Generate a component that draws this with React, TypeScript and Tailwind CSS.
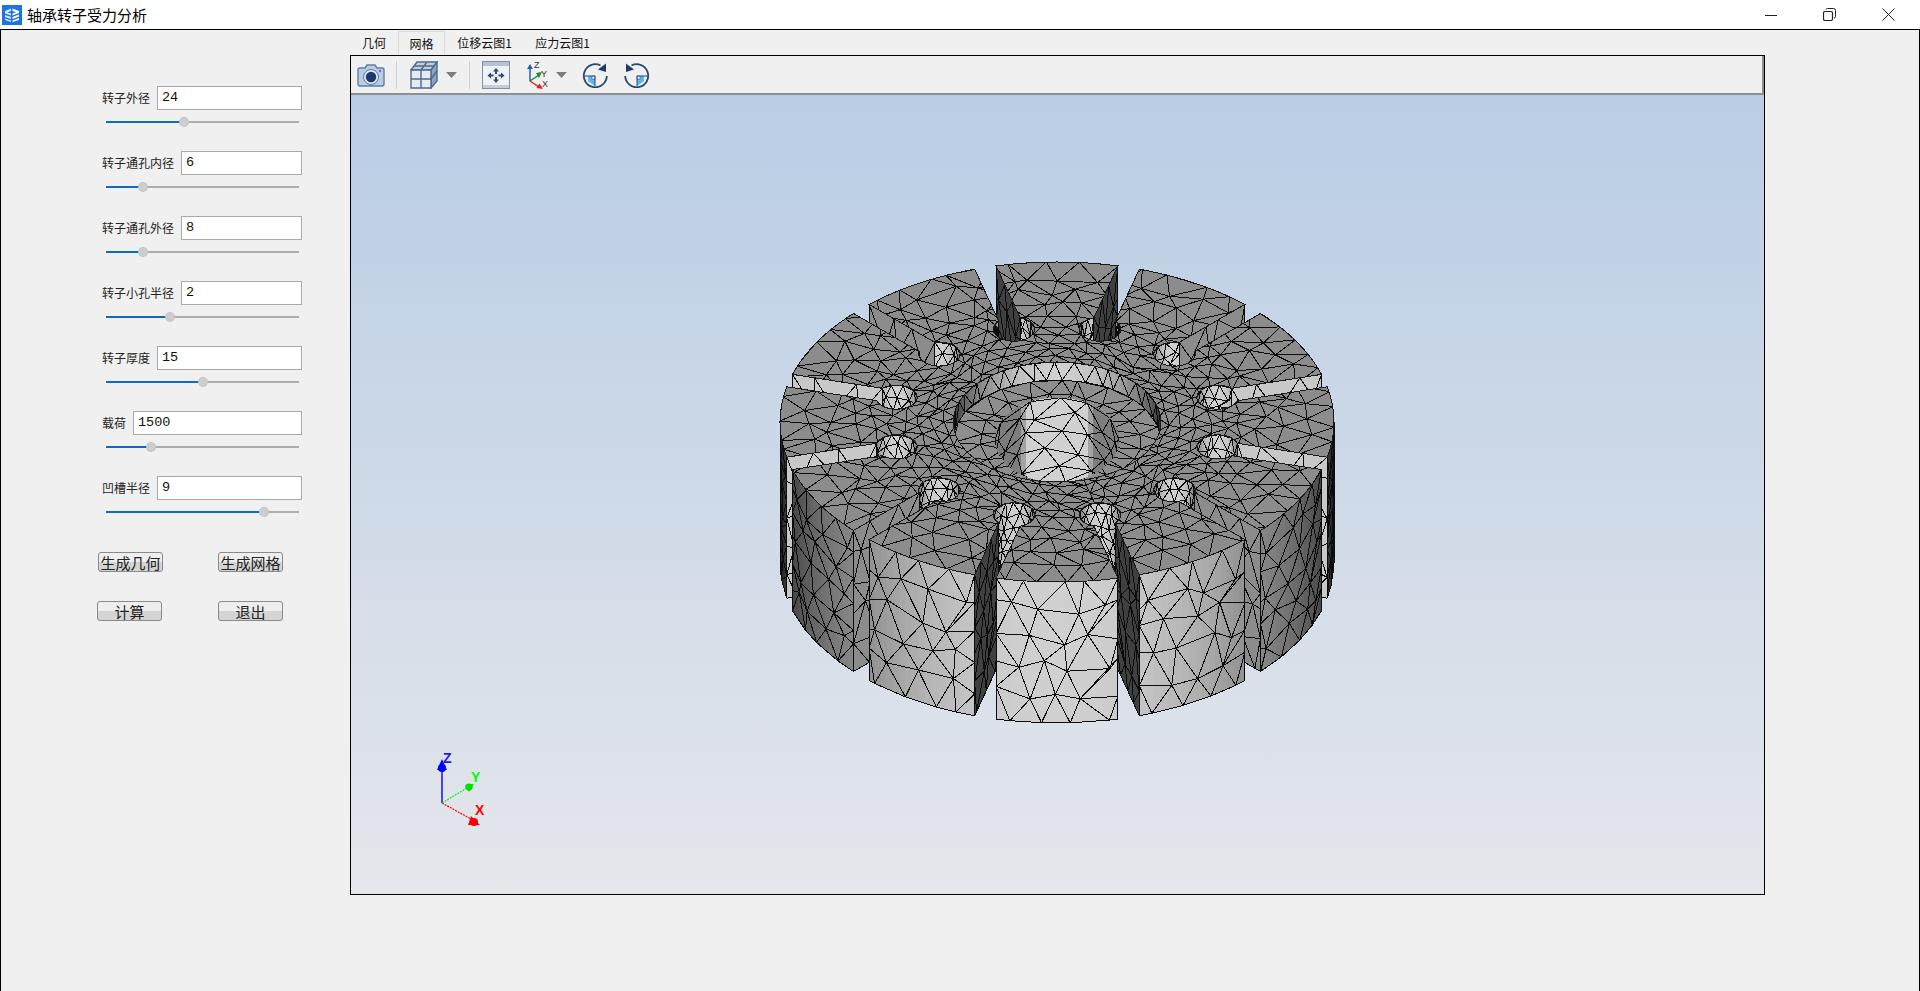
import React, { useMemo } from 'react';

// ---------- rotor mesh: small projection + painter's order, walls first, top face last ----------
const CX = 1057, CY = 422, RX = 277, RY = 160, H = 141;
const SLOT_W = 0.04, HOLE_R = 0.075, HOLE_AT = 0.6, RECESS_R = 0.375, RECESS_T = 18 / 141;
const BORE_X = 0.224, BORE_Y = 0.265;
const rad = (d: number) => (d * Math.PI) / 180;

type PathPt = { x: number; y: number; ny: number };
type Fill = { pts: string; color: string };
type Item = { key: number; fills: Fill[]; lines: string };

function makeRng(seed: number) {
  let s = seed;
  return () => {
    s = (s + 0x6d2b79f5) | 0;
    let t = Math.imul(s ^ (s >>> 15), 1 | s);
    t = (t + Math.imul(t ^ (t >>> 7), 61 | t)) ^ t;
    return ((t ^ (t >>> 14)) >>> 0) / 4294967296;
  };
}
const rng = makeRng(24);

const proj = (x: number, y: number, t: number): [number, number] => [CX + x * RX, CY + y * RY + t * H];
const f1 = (n: number) => n.toFixed(1);

function shade(ny: number) {
  const nv = Math.max(0, ny) * 0.816;
  const g = Math.min(225, Math.round(20 + 208 * nv + 83 * Math.max(0, nv - 0.6)));
  return `rgb(${g},${g},${g})`;
}

// triangle net over a (u,v) patch, odd rows shifted half a column; rows may have different column counts
function meshLines(
  fn: (u: number, v: number) => [number, number],
  cols: number | ((row: number) => number),
  rows: number,
  ju = 0.28,
  jv = 0.28,
) {
  const grid: { u: number; p: [number, number] }[][] = [];
  for (let r = 0; r <= rows; r++) {
    const n = typeof cols === 'number' ? cols : cols(r);
    const row: { u: number; p: [number, number] }[] = [];
    const us: number[] = [];
    if (r % 2 === 0) for (let i = 0; i <= n; i++) us.push(i / n);
    else {
      us.push(0);
      for (let i = 0; i < n; i++) us.push((i + 0.5) / n);
      us.push(1);
    }
    for (const u of us) {
      const uu = u === 0 || u === 1 ? u : u + ((rng() - 0.5) * 2 * ju) / n;
      const vv = r === 0 || r === rows ? r / rows : (r + (rng() - 0.5) * 2 * jv) / rows;
      row.push({ u, p: fn(uu, vv) });
    }
    grid.push(row);
  }
  let d = '';
  const seg = (a: [number, number], b: [number, number]) => {
    d += `M${f1(a[0])} ${f1(a[1])}L${f1(b[0])} ${f1(b[1])}`;
  };
  grid.forEach((row) => {
    for (let i = 0; i < row.length - 1; i++) seg(row[i].p, row[i + 1].p);
  });
  for (let r = 0; r < rows; r++) {
    const a = grid[r], b = grid[r + 1];
    let i = 0, j = 0;
    seg(a[0].p, b[0].p);
    while (i < a.length - 1 || j < b.length - 1) {
      if (j === b.length - 1 || (i < a.length - 1 && a[i + 1].u <= b[j + 1].u)) i++;
      else j++;
      seg(a[i].p, b[j].p);
    }
  }
  return d;
}

function wall(path: PathPt[], t0: number, t1: number, cols: number, rows: number): Item {
  const fills: Fill[] = [];
  let sum = 0;
  for (let i = 0; i < path.length - 1; i++) {
    const a = path[i], b = path[i + 1];
    const q = [proj(a.x, a.y, t0), proj(b.x, b.y, t0), proj(b.x, b.y, t1), proj(a.x, a.y, t1)];
    fills.push({ pts: q.map((p) => `${f1(p[0])},${f1(p[1])}`).join(' '), color: shade((a.ny + b.ny) / 2) });
    sum += a.y;
  }
  const at = (u: number, v: number): [number, number] => {
    const f = u * (path.length - 1);
    const i = Math.min(path.length - 2, Math.floor(f));
    const k = f - i;
    const a = path[i], b = path[i + 1];
    return proj(a.x + (b.x - a.x) * k, a.y + (b.y - a.y) * k, t0 + (t1 - t0) * v);
  };
  return { key: sum / Math.max(1, path.length - 1), fills, lines: meshLines(at, cols, rows) };
}

function buildRotor() {
  const items: Item[] = [];
  const da = (Math.asin(SLOT_W) * 180) / Math.PI;
  const psi0 = (Math.asin(SLOT_W / HOLE_R) * 180) / Math.PI;
  const rj = HOLE_AT + Math.sqrt(HOLE_R * HOLE_R - SLOT_W * SLOT_W);
  const outline: [number, number][] = [];

  for (let k = 0; k < 12; k++) {
    const a = 15 + 30 * k;
    const s = Math.sin(rad(a)), c = Math.cos(rad(a));
    const e = { x: s, y: c }, tg = { x: c, y: -s };

    // tooth outer arc, ends at this slot
    const a0 = a - 30 + da, a1 = a - da;
    const arc: PathPt[] = [];
    for (let th = a0; th <= a1 + 0.01; th += (a1 - a0) / 16) {
      const x = Math.sin(rad(th)), y = Math.cos(rad(th));
      outline.push(proj(x, y, 0));
      if (y > 0) arc.push({ x, y, ny: y });
    }
    if (arc.length > 1) {
      const span = Math.abs(arc[arc.length - 1].x - arc[0].x);
      items.push(wall(arc, 0, 1, Math.max(2, Math.round(((arc.length - 1) / 16) * 4)), span > 0.25 ? 5 : 6));
    }

    // slot sides
    const minus = (r: number) => ({ x: e.x * r - tg.x * SLOT_W, y: e.y * r - tg.y * SLOT_W });
    const plus = (r: number) => ({ x: e.x * r + tg.x * SLOT_W, y: e.y * r + tg.y * SLOT_W });
    const rOut = Math.sqrt(1 - SLOT_W * SLOT_W);
    const m0 = minus(rOut), m1 = minus(rj), p1 = plus(rj), p0 = plus(rOut);
    outline.push(proj(m0.x, m0.y, 0), proj(m1.x, m1.y, 0));
    if (tg.y > 0) items.push(wall([{ ...m0, ny: tg.y }, { ...m1, ny: tg.y }], 0, 1, 3, 5));
    if (tg.y < 0) items.push(wall([{ ...p0, ny: -tg.y }, { ...p1, ny: -tg.y }], 0, 1, 3, 5));

    // hole at the slot's inner end, its far side reads bright with a fine net
    const hc = { x: e.x * HOLE_AT, y: e.y * HOLE_AT };
    let run: PathPt[] = [];
    const flush = () => {
      if (run.length > 1) items.push(wall(run, 0, 0.5, Math.max(3, Math.round(run.length / 4)), 6));
      run = [];
    };
    for (let d = psi0; d <= 360 - psi0 + 0.01; d += (360 - 2 * psi0) / 36) {
      const cs = Math.cos(rad(-d)), sn = Math.sin(rad(-d));
      const x = hc.x + HOLE_R * (e.x * cs + tg.x * sn);
      const y = hc.y + HOLE_R * (e.y * cs + tg.y * sn);
      outline.push(proj(x, y, 0));
      const ny = -(y - hc.y) / HOLE_R;
      if (ny > 0) run.push({ x, y, ny: Math.pow(ny, 0.45) });
      else flush();
    }
    flush();
    outline.push(proj(p1.x, p1.y, 0), proj(p0.x, p0.y, 0));
  }

  // central bore, three faces are seen
  const bore: PathPt[] = [];
  for (let p = 90; p <= 270; p += 5) {
    const dist = Math.abs(p - 180);
    bore.push({ x: BORE_X * Math.sin(rad(p)), y: BORE_Y * Math.cos(rad(p)), ny: dist <= 30 ? 1 : 0.62 });
  }
  const boreItem = wall(bore, RECESS_T, 0.72, 6, 5);
  boreItem.key = 0;
  items.push(boreItem);

  // recess floor
  const ring = (r: number, rr: number, t: number) => {
    let d = '';
    for (let i = 0; i <= 72; i++) {
      const p = proj(r * Math.sin(rad(i * 5)), rr * Math.cos(rad(i * 5)), t);
      d += `${i ? 'L' : 'M'}${f1(p[0])} ${f1(p[1])}`;
    }
    return d + 'Z';
  };
  const floorPath = ring(RECESS_R, RECESS_R, RECESS_T) + ring(BORE_X, BORE_Y, RECESS_T);
  const floorLines = meshLines(
    (u, v) => {
      const r = RECESS_R + (0.2 - RECESS_R) * v;
      return proj(r * Math.sin(rad(15 + u * 360)), r * Math.cos(rad(15 + u * 360)), RECESS_T);
    },
    24, 2, 0.25, 0.25,
  );

  // recess wall, far half
  const rw: PathPt[] = [];
  for (let p = 90; p <= 270; p += 4) {
    const y = Math.cos(rad(p));
    rw.push({ x: RECESS_R * Math.sin(rad(p)), y: RECESS_R * y, ny: -y });
  }
  const rwItem = wall(rw, 0, RECESS_T, 18, 1);
  rwItem.key = 0.02;

  // top face: coarse at the rim, finer towards the hub, but not much
  const outlineD = outline.map((p, i) => `${i ? 'L' : 'M'}${f1(p[0])} ${f1(p[1])}`).join('') + 'Z';
  const topPath = outlineD + ring(RECESS_R, RECESS_R, 0);
  const radii = [1.002, 0.905, 0.815, 0.735, 0.665, 0.605, 0.55, 0.5, 0.45, 0.405, 0.365];
  const rowCols = [54, 54, 54, 54, 54, 54, 48, 44, 40, 36, 32];
  const topLines = meshLines(
    (u, v) => {
      const f = v * (radii.length - 1);
      const i = Math.min(radii.length - 2, Math.floor(f));
      const r = radii[i] + (radii[i + 1] - radii[i]) * (f - i);
      return proj(r * Math.sin(rad(15 + u * 360)), r * Math.cos(rad(15 + u * 360)), 0);
    },
    (r) => rowCols[r],
    radii.length - 1, 0.3, 0.3,
  );

  const sorted = items.sort((a, b) => a.key - b.key);
  const back = sorted.filter((i) => i.key <= 0);
  const front = sorted.filter((i) => i.key > 0);
  return { back, front, rwItem, floorPath, floorLines, topPath, outlineD, topLines };
}

const WallG = ({ item }: { item: Item }) => (
  <g>
    {item.fills.map((f, i) => (
      <polygon key={i} points={f.pts} fill={f.color} />
    ))}
    <path d={item.lines} fill="none" stroke="#0c0c0c" strokeWidth="1" />
  </g>
);

const RotorMesh = () => {
  const m = useMemo(buildRotor, []);
  return (
    <svg className="absolute inset-0 w-full h-full" viewBox="352 95 1411 799" shapeRendering="crispEdges">
      <defs>
        <clipPath id="topClip">
          <path d={m.topPath} clipRule="evenodd" />
        </clipPath>
        <clipPath id="floorClip">
          <path d={m.floorPath} clipRule="evenodd" />
        </clipPath>
      </defs>
      {m.back.map((it, i) => <WallG key={i} item={it} />)}
      <path d={m.floorPath} fill="#8e8e8e" fillRule="evenodd" />
      <path d={m.floorLines} clipPath="url(#floorClip)" fill="none" stroke="#0c0c0c" />
      <WallG item={m.rwItem} />
      {m.front.map((it, i) => <WallG key={i} item={it} />)}
      <path d={m.topPath} fill="#8c8c8c" fillRule="evenodd" />
      <path d={m.topLines} clipPath="url(#topClip)" fill="none" stroke="#0c0c0c" />
      <path d={m.topPath} fill="none" stroke="#1a1a1a" />
      <AxisTriad />
    </svg>
  );
};

const AxisTriad = () => (
  <g shapeRendering="auto" fontFamily="'Liberation Sans', sans-serif" fontWeight="700" fontSize="14">
    <line x1="442" y1="803" x2="442" y2="766" stroke="#0000ff" strokeWidth="1.4" />
    <path d="M442 759 L447 770 L437 770 Z" fill="#0000ff" />
    <circle cx="442" cy="768" r="4" fill="#0000ff" />
    <line x1="442" y1="803" x2="467" y2="788" stroke="#00ff00" strokeWidth="1.2" strokeDasharray="2 1" />
    <path d="M474 784 L465 785 L469 792 Z" fill="#00e000" />
    <circle cx="469" cy="787" r="3.6" fill="#00e000" />
    <line x1="442" y1="803" x2="471" y2="819" stroke="#ff0000" strokeWidth="1.2" strokeDasharray="2 1" />
    <path d="M480 825 L471 816 L468 825 Z" fill="#ff0000" />
    <circle cx="474" cy="822" r="4" fill="#ff0000" />
    <text x="443" y="763" fill="#1a1af0">Z</text>
    <text x="471" y="782" fill="#00ff00">Y</text>
    <text x="475" y="815" fill="#ff0000">X</text>
  </g>
);

// ---------- toolbar icons ----------
const CameraIcon = () => (
  <svg width="28" height="24" viewBox="0 0 28 24">
    <path d="M1 6.5 Q1 5 3 5 H8 L10 2 H18 L20 5 H25 Q27 5 27 6.5 V21 Q27 23 25 23 H3 Q1 23 1 21 Z" fill="#b9cce3" stroke="#5f7da3" strokeWidth="1.4" />
    <circle cx="14" cy="14" r="7.5" fill="#dbe6f2" stroke="#5f7da3" />
    <circle cx="14" cy="14" r="5.2" fill="#1c3a6b" />
    <circle cx="23" cy="8" r="1.2" fill="#5f7da3" />
  </svg>
);

const CubeIcon = () => (
  <svg width="28" height="28" viewBox="0 0 28 28" fill="none" stroke="#4f6a8f" strokeWidth="1.4">
    <path d="M1 9 L7 1 H27 L21 9 Z" fill="#c4cfdc" />
    <path d="M21 9 L27 1 V20 L21 27 Z" fill="#8ea3bd" />
    <path d="M1 9 H21 V27 H1 Z" fill="#e6ebf1" />
    <path d="M11 9 V27 M1 18 H21 M4 5 H24 M11 9 L17 1 M21 18 L27 10" />
  </svg>
);

const FitIcon = () => (
  <svg width="28" height="28" viewBox="0 0 28 28">
    <rect x="0.5" y="0.5" width="27" height="27" fill="#eef1f5" stroke="#7c90aa" />
    <rect x="1" y="1" width="26" height="4" fill="#b4c3d5" />
    <rect x="1" y="24" width="26" height="3" fill="#c3cedb" />
    <g fill="#2e4a73">
      <path d="M14 7 L11 10.5 H13 V13 H15 V10.5 H17 Z" />
      <path d="M14 22 L11 18.5 H13 V16 H15 V18.5 H17 Z" />
      <path d="M5.5 14.5 L9 11.5 V13.5 H11.5 V15.5 H9 V17.5 Z" />
      <path d="M22.5 14.5 L19 11.5 V13.5 H16.5 V15.5 H19 V17.5 Z" />
    </g>
  </svg>
);

const AxesIcon = () => (
  <svg width="26" height="30" viewBox="0 0 26 30" fontFamily="'Liberation Sans', sans-serif" fontSize="9">
    <line x1="6" y1="21" x2="6" y2="8" stroke="#1f5fc0" strokeWidth="1.5" />
    <path d="M6 4 L9 9 H3 Z" fill="#1f5fc0" />
    <line x1="6" y1="21" x2="15" y2="15" stroke="#1d8a3a" strokeWidth="1.5" />
    <path d="M18 12 L12 13 L15 18 Z" fill="#1d8a3a" />
    <line x1="6" y1="21" x2="15" y2="27" stroke="#e02020" strokeWidth="1.5" />
    <path d="M19 29 L12.5 28 L15.5 23.5 Z" fill="#e02020" />
    <text x="10" y="7.5" fill="#333">Z</text>
    <text x="17" y="17" fill="#333">Y</text>
    <text x="18" y="27" fill="#333">X</text>
  </svg>
);

const RotateIcon = ({ flip = false }: { flip?: boolean }) => (
  <svg width="26" height="26" viewBox="0 0 26 26" style={flip ? { transform: 'scaleX(-1)' } : undefined}>
    <path d="M13 14 H6 V19 L13 24 Z" fill="#5cb8e6" />
    <rect x="10" y="14" width="3" height="3" fill="#fff" stroke="#2b5a8a" strokeWidth="0.6" />
    <path d="M1.5 14 H13 V25" fill="none" stroke="#2b4a73" strokeWidth="1" />
    <path d="M18.5 3.5 A11.5 11.5 0 1 0 24.8 14" fill="none" stroke="#2b4a73" strokeWidth="1.8" />
    <path d="M24 1.5 L24 10 L16 7.5 Z" fill="#1c3a6b" />
  </svg>
);

const DropArrow = () => (
  <svg width="11" height="6" viewBox="0 0 11 6">
    <path d="M0 0 H11 L5.5 6 Z" fill="#7d7d7d" />
  </svg>
);

const ToolSep = () => <div className="w-px h-[28px] bg-[#d0d0d0]" />;

// ---------- left panel ----------
const params = [
  { label: '转子外径', value: '24', pct: 40.6 },
  { label: '转子通孔内径', value: '6', pct: 19.3 },
  { label: '转子通孔外径', value: '8', pct: 19.3 },
  { label: '转子小孔半径', value: '2', pct: 33 },
  { label: '转子厚度', value: '15', pct: 50.5 },
  { label: '载荷', value: '1500', pct: 23.4 },
  { label: '凹槽半径', value: '9', pct: 81.8 },
];

const ParamRow = ({ label, value, pct }: { label: string; value: string; pct: number }) => (
  <div className="h-[65px]">
    <div className="flex items-center gap-[7px] h-[24px]">
      <span className="text-[12px] leading-none text-[#222] whitespace-nowrap">{label}</span>
      <div className="flex-1 h-[24px] bg-white border border-[#a9a9a9] pl-[4px] flex items-center font-['Liberation_Mono',monospace] text-[13.5px] text-[#111]">
        {value}
      </div>
    </div>
    <div className="relative mt-[11px] ml-[4px] mr-[3px] h-[2px] bg-[#adadad]">
      <div className="h-full bg-[#0f6cbd]" style={{ width: `${pct}%` }} />
      <div className="absolute top-[-4px] w-[10px] h-[10px] -ml-[5px] rounded-full bg-[#cdcdcd] border border-dotted border-[#bcbcbc]" style={{ left: `${pct}%` }} />
    </div>
  </div>
);

const QtButton = ({ text, className }: { text: string; className?: string }) => (
  <div className={`w-[65px] h-[20px] rounded-[3px] border border-[#8a8a8a] bg-linear-to-b from-[#eeeeee] from-50% to-[#d4d4d4] to-50% flex items-center justify-center text-[15px] leading-none text-[#222] ${className ?? ''}`}>
    {text}
  </div>
);

const tabs = [
  { name: '几何', w: 'w-[48px]', active: false },
  { name: '网格', w: 'w-[47px]', active: true },
  { name: '位移云图1', w: 'w-[79px]', active: false },
  { name: '应力云图1', w: 'w-[77px]', active: false },
];

const App = () => {
  return (
    <div className="w-[1920px] h-[991px] flex flex-col overflow-hidden bg-[#f0f0f0] font-['Noto_Sans_CJK_SC','Noto_Sans',sans-serif]">
      {/* title bar */}
      <div className="h-[29px] shrink-0 bg-white flex items-center pl-[2px]">
        <svg width="20" height="20" viewBox="0 0 20 20">
          <rect width="20" height="20" fill="#1b74e4" />
          <path d="M3 6 L9 3.5 L9 6 L5.5 7.4 L9 8.6 L9 10.5 L3 8.5 Z M3 10 L9 12 V14 L3 12 Z M3 13.5 L9 15.5 V17 L3 15 Z" fill="#d6e8ff" />
          <path d="M10.5 3.5 L17 6 V8 L10.5 10.5 V8.5 L14 7.2 L10.5 6 Z M10.5 12 L17 9.5 V11.5 L10.5 14 Z M10.5 15.5 L17 13 V15 L10.5 17 Z" fill="#ffffff" />
        </svg>
        <span className="ml-[5px] text-[15px] leading-none text-black">轴承转子受力分析</span>
        <div className="ml-auto flex items-center h-full">
          <div className="w-[58px] flex justify-center">
            <svg width="12" height="12" viewBox="0 0 12 12"><path d="M0 6.5 H12" stroke="#222" strokeWidth="1" /></svg>
          </div>
          <div className="w-[59px] flex justify-center">
            <svg width="13" height="13" viewBox="0 0 13 13" fill="none" stroke="#222"><rect x="0.5" y="3.5" width="9" height="9" rx="1.5" strokeWidth="1.2" /><path d="M3 1.5 Q3 0.5 4.5 0.5 H10.5 Q12.5 0.5 12.5 2.5 V8.5 Q12.5 10 11 10" /></svg>
          </div>
          <div className="w-[58px] mr-[3px] flex justify-center">
            <svg width="13" height="13" viewBox="0 0 13 13"><path d="M0.5 0.5 L12.5 12.5 M12.5 0.5 L0.5 12.5" stroke="#222" /></svg>
          </div>
        </div>
      </div>

      {/* window body */}
      <div className="flex-1 flex border-t border-l border-r border-black min-h-0">
        <div className="w-[349px] shrink-0 pt-[56px] pl-[101px] pr-[48px]">
          {params.map((p) => (
            <ParamRow key={p.label} {...p} />
          ))}
          <div className="mt-[11px] w-[186px] -ml-[5px] flex justify-between">
            <QtButton text="生成几何" className="ml-[1px]" />
            <QtButton text="生成网格" />
          </div>
          <div className="mt-[29px] w-[186px] -ml-[5px] flex justify-between">
            <QtButton text="计算" />
            <QtButton text="退出" />
          </div>
        </div>

        <div className="w-[1415px] flex flex-col">
          <div className="h-[25px] pt-[1px] flex text-[12px] leading-none text-[#111]">
            {tabs.map((t) => (
              <div
                key={t.name}
                className={`${t.w} h-[24px] flex items-center justify-center ${t.active ? 'border border-b-0 border-[#d9d9d9]' : ''}`}
              >
                {t.name}
              </div>
            ))}
          </div>
          <div className="h-[840px] border border-black flex flex-col">
            <div className="h-[39px] shrink-0 bg-[#f0f0f0] border-r-2 border-b-2 border-[#8f8f8f] flex items-center pl-[6px]">
              <CameraIcon />
              <div className="ml-[11px]"><ToolSep /></div>
              <div className="ml-[13px]"><CubeIcon /></div>
              <div className="ml-[8px]"><DropArrow /></div>
              <div className="ml-[12px]"><ToolSep /></div>
              <div className="ml-[12px]"><FitIcon /></div>
              <div className="ml-[14px]"><AxesIcon /></div>
              <div className="ml-[6px]"><DropArrow /></div>
              <div className="ml-[15px]"><RotateIcon /></div>
              <div className="ml-[16px]"><RotateIcon flip /></div>
            </div>
            <div className="relative flex-1 bg-linear-to-b from-[#b9cde5] to-[#e5e7eb]">
              <RotorMesh />
            </div>
          </div>
        </div>
      </div>
    </div>
  );
};

export default App;
